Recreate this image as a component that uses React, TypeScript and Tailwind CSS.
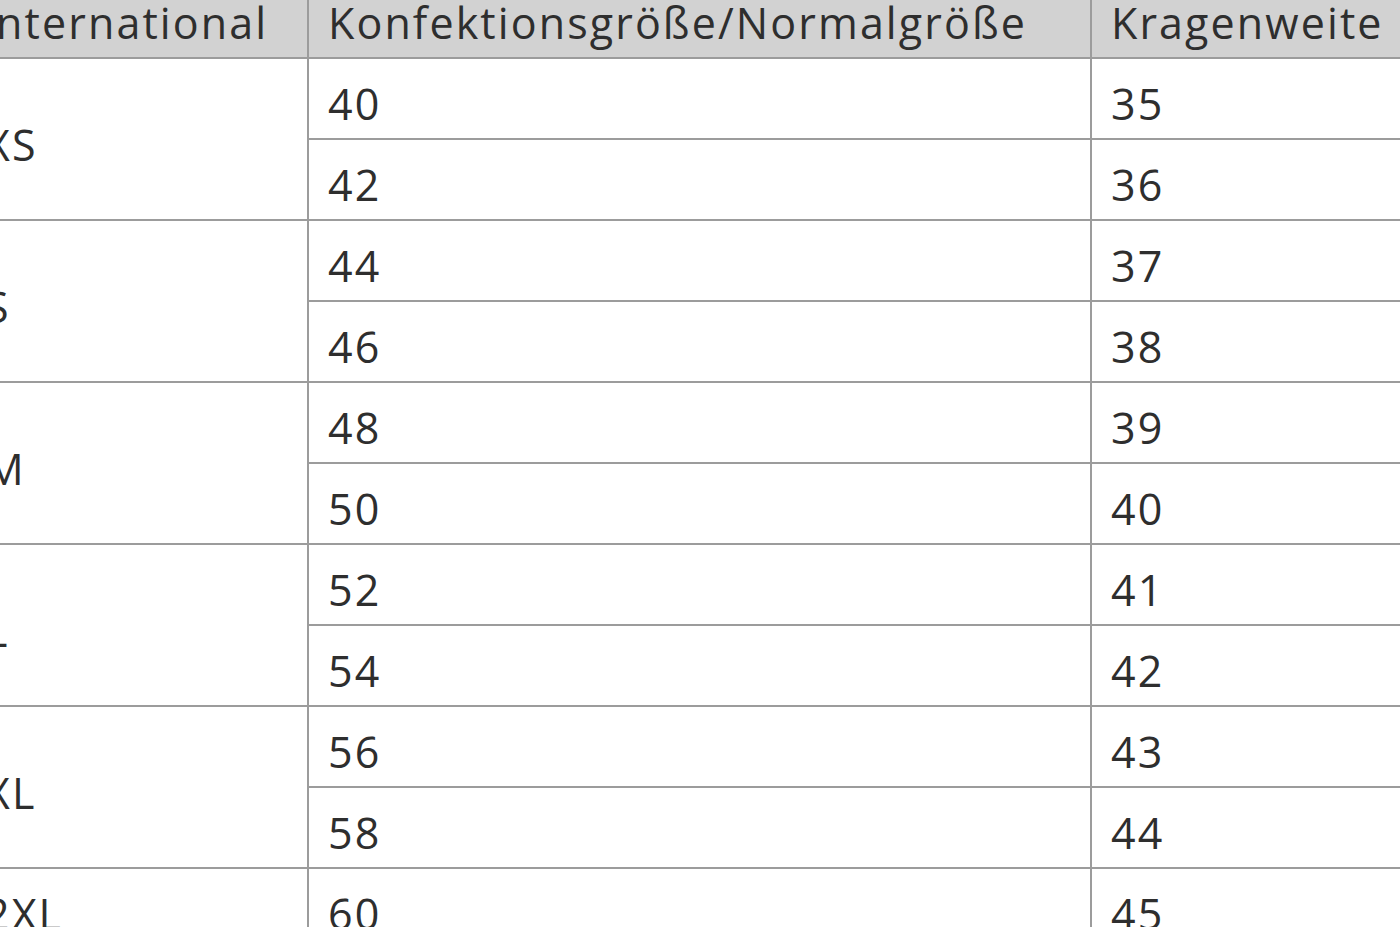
import React from 'react';

type SizeRow = { intl: string; sizes: [number, number][] };

const rows: SizeRow[] = [
  { intl: 'XS', sizes: [[40, 35], [42, 36]] },
  { intl: 'S', sizes: [[44, 37], [46, 38]] },
  { intl: 'M', sizes: [[48, 39], [50, 40]] },
  { intl: 'L', sizes: [[52, 41], [54, 42]] },
  { intl: 'XL', sizes: [[56, 43], [58, 44]] },
  { intl: '2XL', sizes: [[60, 45]] },
];

const base = 'border-2 border-[#9c9c9c] h-[81px] pt-[10px] pb-0 align-middle text-left font-normal';
const cell = `${base} pl-[19px]`;

const App: React.FC = () => {
  return (
    <div
      className="w-[1400px] h-[927px] overflow-hidden bg-white text-[#2e2e2e]"
      style={{ fontFamily: '"Open Sans", "Noto Sans", sans-serif' }}
    >
      <table className="table-fixed border-collapse ml-[-33px] mt-[-24px] w-[1560px] text-[43px] leading-none tracking-[2.1px]">
        <colgroup>
          <col className="w-[340px]" />
          <col className="w-[783px]" />
          <col />
        </colgroup>
        <thead>
          <tr className="bg-[#d2d2d2]">
            <th className={`${base} pl-[13px]`}>International</th>
            <th className={cell}>Konfektionsgröße/Normalgröße</th>
            <th className={cell}>Kragenweite</th>
          </tr>
        </thead>
        <tbody>
          {rows.map((row) =>
            row.sizes.map(([normal, collar], i) => (
              <tr key={`${row.intl}-${normal}`}>
                {i === 0 && (
                  <td rowSpan={row.sizes.length} className={`${base} pl-[16px]`}>
                    {row.intl}
                  </td>
                )}
                <td className={cell}>{normal}</td>
                <td className={cell}>{collar}</td>
              </tr>
            ))
          )}
        </tbody>
      </table>
    </div>
  );
};

export default App;
